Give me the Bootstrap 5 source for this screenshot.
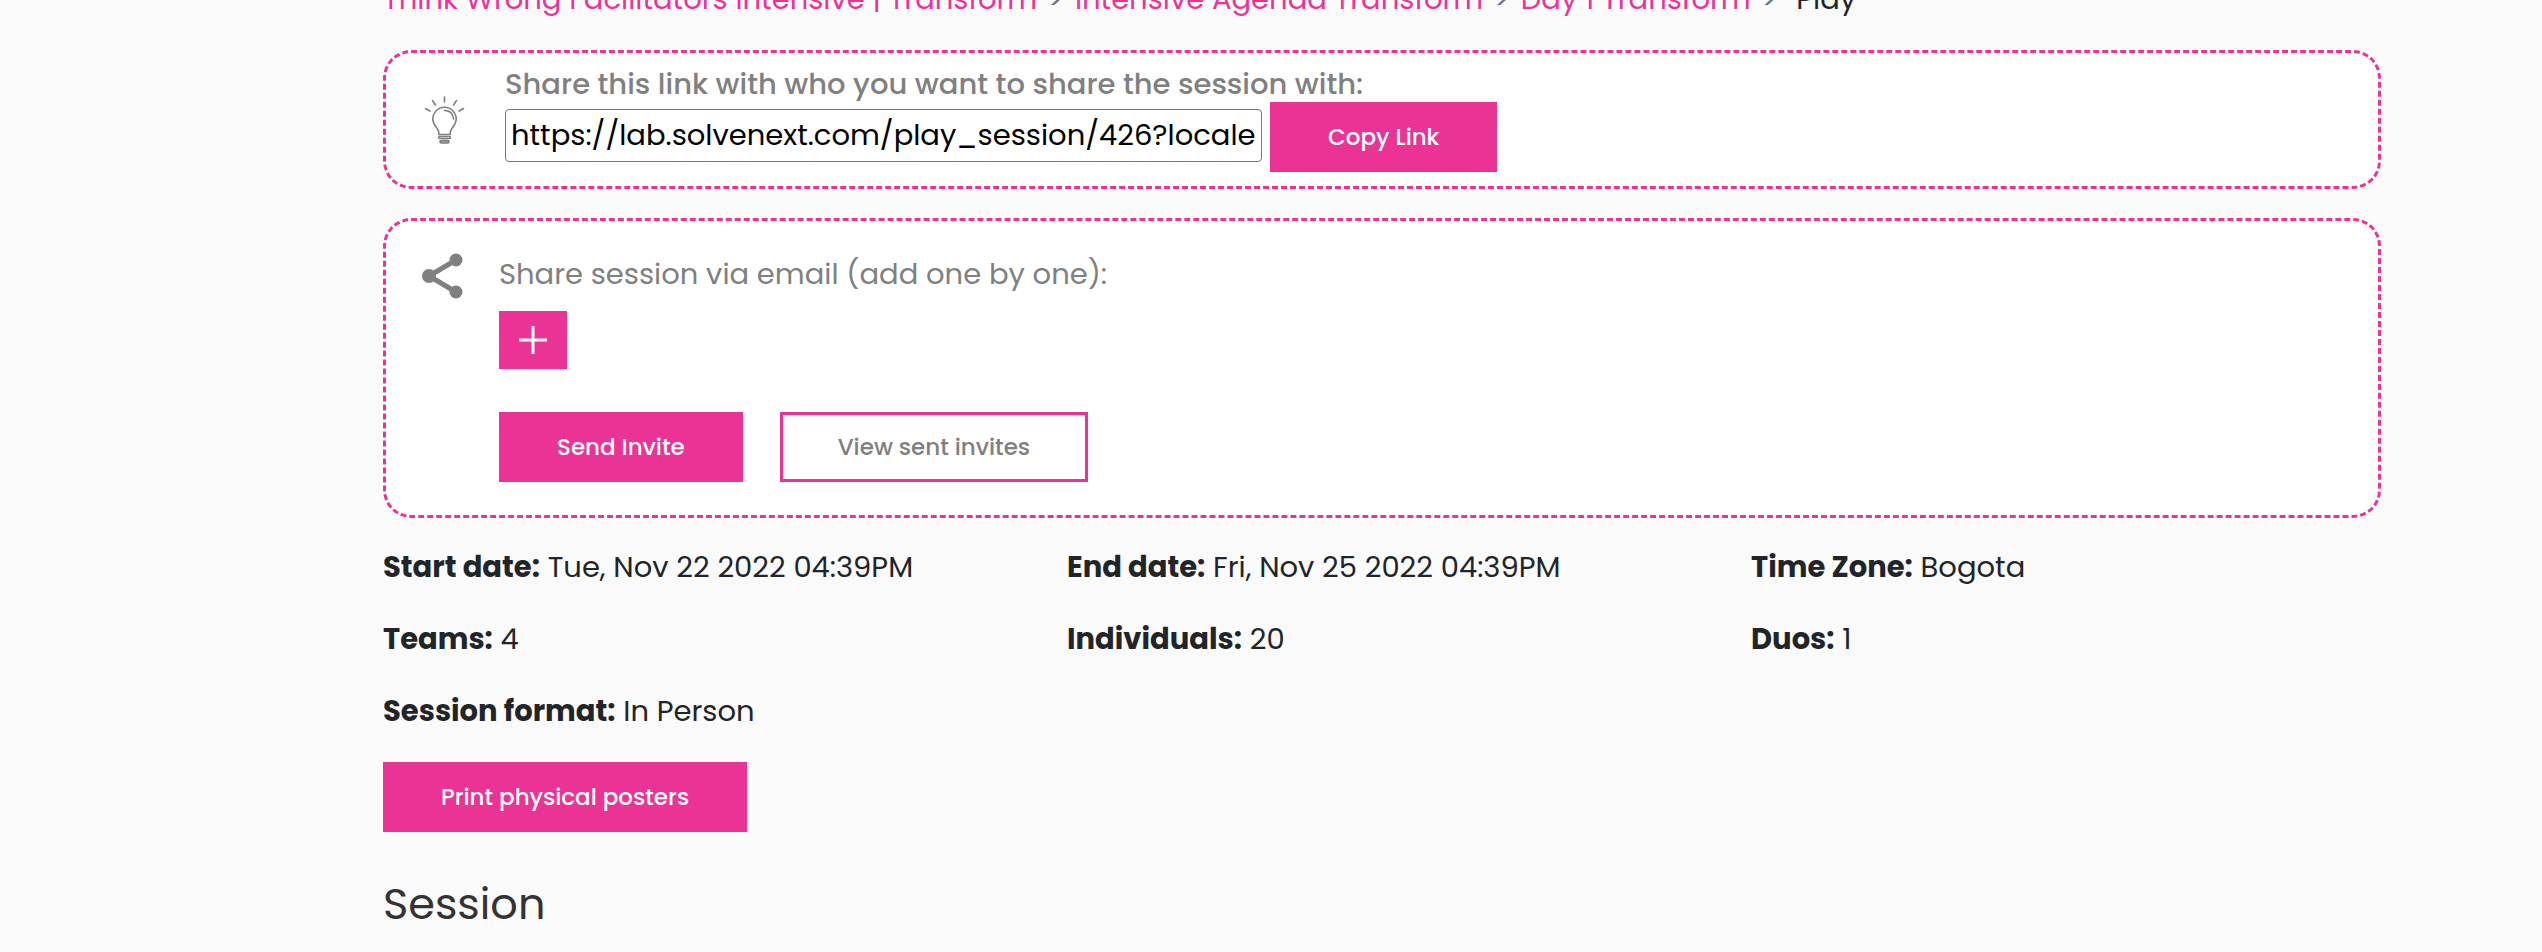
<!DOCTYPE html>
<html lang="en">
<head>
<meta charset="utf-8">
<meta name="viewport" content="width=device-width, initial-scale=1">
<title>Play session</title>
<link rel="stylesheet" href="https://cdn.jsdelivr.net/npm/bootstrap@5.3.0/dist/css/bootstrap.min.css">
<style>
  :root { --brand: #eb3396; --soft: #808080; }
  body {
    background: #fafafa;
    color: #212529;
    font-family: Poppins, Inter, sans-serif;
    font-size: 29px;
    line-height: 44px;
    overflow-x: hidden;
  }
  .page { padding: 0 161px 0 383px; }
  /* the trail is scrolled partly out of view */
  .trail { margin: -23px 0 29px; }
  .trail .breadcrumb { --bs-breadcrumb-divider: '>'; --bs-breadcrumb-item-padding-x: 11px; --bs-breadcrumb-divider-color: #6c757d; --bs-breadcrumb-item-active-color: #212529; }
  .trail a { color: var(--brand); text-decoration: none; }
  .panel { border: 3px dashed var(--brand); border-radius: 28px; background: #fff; color: var(--soft); }
  .link-panel { padding: 14px 32px 14px 38px; margin-bottom: 29px; }
  .mail-panel { padding: 31px 32px 33px 32px; margin-bottom: 27px; }
  .link-panel .body-col { margin-left: 40px; }
  .mail-panel .body-col { margin-left: 27px; }
  .link-panel label { font-weight: 500; line-height: 35px; }
  .link-field {
    width: 757px; height: 53px; padding: 0 4px 0 5px;
    border: 1px solid #767676; border-radius: 4px;
    font-size: 29px; color: #000; background: #fff;
  }
  .btn { --bs-btn-border-radius: 0; --bs-btn-border-width: 3px; --bs-btn-padding-x: 55px; --bs-btn-padding-y: 14px; --bs-btn-font-size: 23px; --bs-btn-font-weight: 500; --bs-btn-line-height: 36px; }
  .btn-brand { --bs-btn-bg: var(--brand); --bs-btn-border-color: var(--brand); --bs-btn-color: #fff; --bs-btn-hover-bg: #d02482; --bs-btn-hover-color: #fff; }
  .btn-line { --bs-btn-bg: #fff; --bs-btn-border-color: var(--brand); --bs-btn-color: var(--soft); --bs-btn-hover-bg: var(--brand); --bs-btn-hover-color: #fff; }
  .btn-add { --bs-btn-padding-x: 17px; --bs-btn-padding-y: 12px; margin: 15px 0 43px; }
  .actions { gap: 37px; }
  .facts { --bs-gutter-x: 54px; --bs-gutter-y: 28px; margin-bottom: 29px; }
  .facts b { font-weight: 700; }
  h2 { font-size: 43px; line-height: 60px; font-weight: 400; color: #333; margin: 42px 0 0; }
</style>
<script src="https://cdn.jsdelivr.net/npm/bootstrap@5.3.0/dist/js/bootstrap.bundle.min.js"></script>
</head>
<body>
<main class="page">
  <nav class="trail" aria-label="breadcrumb">
    <ol class="breadcrumb mb-0">
      <li class="breadcrumb-item"><a href="#">Think Wrong Facilitators Intensive | Transform</a></li>
      <li class="breadcrumb-item"><a href="#">Intensive Agenda Transform</a></li>
      <li class="breadcrumb-item"><a href="#">Day 1 Transform</a></li>
      <li class="breadcrumb-item active" aria-current="page"><span class="ms-2">Play</span></li>
    </ol>
  </nav>

  <section class="panel link-panel d-flex align-items-center">
    <svg width="41" height="50" viewBox="0 0 41 50" fill="none" stroke="#808080" stroke-width="1.6" stroke-linecap="round" aria-hidden="true">
      <path d="M20.500 2V7M8.500 5.500L11.500 10M32.500 5.500L29.500 10M1.500 13.500L6 16M39.500 13.500L35 16"/>
      <path d="M14.800 39.500V37.500C14.800 33 8.800 31 8.800 24A11.700 11.700 0 0 1 32.200 24C32.200 31 26.200 33 26.200 37.500V39.500Z"/>
      <path d="M20.500 15.500C25.500 15.500 29 18.500 29.500 24"/>
      <rect x="14.500" y="41.500" width="12" height="2" rx="1"/>
      <rect x="16" y="45.500" width="9" height="2.500" rx="1.200" fill="#a0a0a0"/>
    </svg>
    <div class="body-col">
      <label class="d-block" for="link">Share this link with who you want to share the session with:</label>
      <div class="d-flex align-items-baseline gap-2">
        <input class="link-field" id="link" type="text" value="https://lab.solvenext.com/play_session/426?locale=en">
        <button class="btn btn-brand" type="button">Copy Link</button>
      </div>
    </div>
  </section>

  <section class="panel mail-panel d-flex align-items-start">
    <svg width="54" height="48" viewBox="0 0 54 48" fill="#808080" stroke="#808080" aria-hidden="true">
      <path d="M38 8L11 24L38 40" fill="none" stroke-width="5"/>
      <circle cx="38" cy="8" r="6.500" stroke="none"/>
      <circle cx="11" cy="24" r="7" stroke="none"/>
      <circle cx="38" cy="40" r="6.500" stroke="none"/>
    </svg>
    <div class="body-col">
      <div>Share session via email (add one by one):</div>
      <button class="btn btn-brand btn-add d-flex" type="button" aria-label="Add email">
        <svg width="28" height="28" viewBox="0 0 28 28" stroke="#fff" stroke-width="3" aria-hidden="true"><path d="M14 0V28M0 14H28"/></svg>
      </button>
      <div class="d-flex actions">
        <button class="btn btn-brand" type="button">Send Invite</button>
        <button class="btn btn-line" type="button">View sent invites</button>
      </div>
    </div>
  </section>

  <div class="row facts">
    <div class="col-4"><b>Start date:</b> Tue, Nov 22 2022 04:39PM</div>
    <div class="col-4"><b>End date:</b> Fri, Nov 25 2022 04:39PM</div>
    <div class="col-4"><b>Time Zone:</b> Bogota</div>
    <div class="col-4"><b>Teams:</b> 4</div>
    <div class="col-4"><b>Individuals:</b> 20</div>
    <div class="col-4"><b>Duos:</b> 1</div>
    <div class="col-12"><b>Session format:</b> In Person</div>
  </div>

  <button class="btn btn-brand" type="button">Print physical posters</button>
  <h2>Session</h2>
</main>
</body>
</html>
